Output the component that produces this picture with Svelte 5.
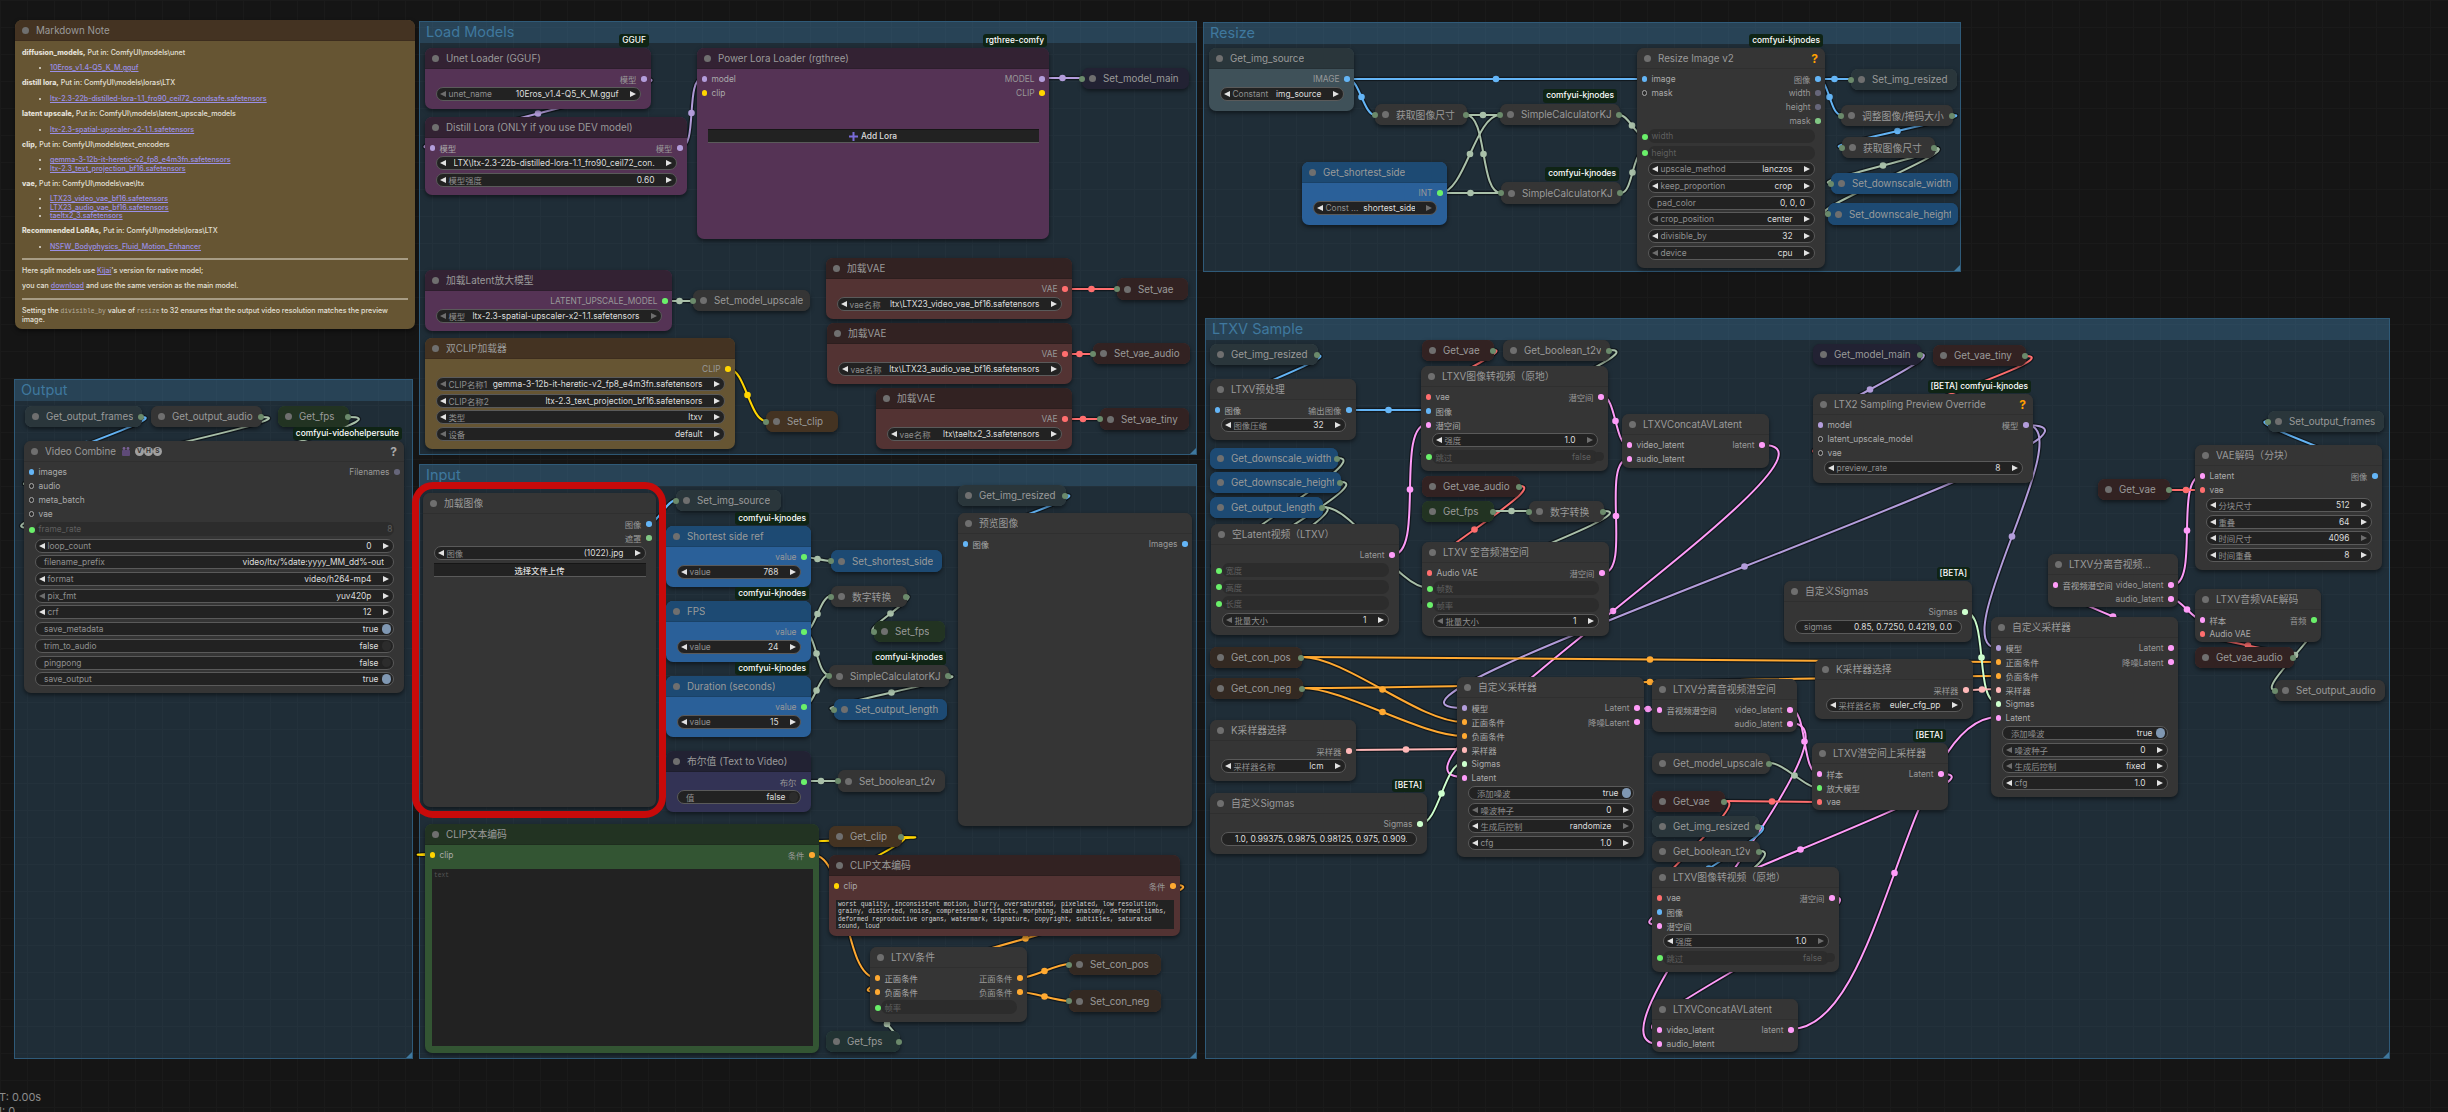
<script>
  const C = { M:'#b39ddb', Y:'#ffd500', V:'#ff6e6e', I:'#64b5f6', K:'#81c784', L:'#ff9cf9', O:'#ffa931', G:'#a9c0a9', S:'#cdffcd', A:'#ffb8b8', T:'#6af06a' };

  const groups = [
    { t:'Load Models', x:419, y:21, x2:1197, y2:455 },
    { t:'Resize', x:1203, y:22, x2:1961, y2:272 },
    { t:'Output', x:14, y:379, x2:413, y2:1059 },
    { t:'Input', x:419, y:464, x2:1197, y2:1059 },
    { t:'LTXV Sample', x:1205, y:318, x2:2390, y2:1059 }
  ].map(g => ({ ...g, w:g.x2-g.x, h:g.y2-g.y }));

  const L = (a,b,c,d,col,dot=true) => {
    const dist = Math.hypot(c-a,d-b), k = dist*0.25;
    return { d:`M${a} ${b}C${a+k} ${b} ${c-k} ${d} ${c} ${d}`, col:C[col], cx:(a+c)/2, cy:(b+d)/2, dot };
  };

  const links = [
    L(645,79,431,148,'M'), L(680,148,703,78,'M'), L(1043,78,1082,78,'M'),
    L(666,301,693,301,'G'), L(729,369,766,421,'Y'),
    L(1066,289,1117,289,'V'), L(1066,354,1093,354,'V'), L(1066,419,1100,419,'V'),
    L(1348,79,1644,79,'I'), L(1348,79,1375,115,'I'),
    L(1466,115,1500,115,'G'), L(1466,115,1501,193,'G'),
    L(1440,193,1500,115,'G'), L(1440,193,1501,193,'G'),
    L(1620,115,1644,136,'G'), L(1621,193,1644,152,'G'),
    L(1818,79,1851,79,'I'), L(1818,79,1841,115,'I'),
    L(1953,115,1842,147,'I'), L(1935,148,1831,183,'G'), L(1935,148,1828,214,'G'),
    L(142,417,31,471,'I'), L(262,417,31,485,'G'), L(349,417,31,528,'G'),
    L(649,523,676,500,'I'), L(804,557,831,561,'G'),
    L(804,632,831,596,'G'), L(804,632,829,675,'G'), L(804,706,829,675,'G'),
    L(907,596,874,631,'G'), L(949,676,834,709,'G'), L(804,781,838,781,'G'),
    L(1066,495,965,543,'I'),
    L(902,837,431,855,'Y'), L(902,837,835,885,'Y'),
    L(813,855,877,978,'O'), L(1174,885,877,992,'O'),
    L(1020,978,1069,964,'O'), L(1020,992,1069,1001,'O'), L(897,1041,877,1007,'G'),
    L(1317,355,1217,410,'I'), L(1349,410,1428,410,'I'),
    L(1338,458,1218,569,'G'), L(1341,482,1218,586,'G'), L(1323,507,1218,603,'G'), L(1323,507,1429,588,'G'),
    L(1494,350,1428,396,'V'), L(1610,350,1428,456,'G'),
    L(1392,555,1428,424,'L'), L(1602,396,1629,446,'L'), L(1603,573,1629,459,'L'),
    L(1763,445,1463,777,'L'), L(1520,486,1429,573,'V'),
    L(1494,511,1529,511,'G'), L(1604,511,1429,604,'G'),
    L(2026,425,1463,708,'M'), L(2026,425,1998,648,'M'), L(1920,354,1820,425,'M'),
    L(2025,356,1820,453,'V'),
    L(1302,657,1463,722,'O'), L(1302,657,1998,662,'O'),
    L(1302,688,1463,736,'O'), L(1302,688,1998,676,'O'),
    L(1349,750,1463,749,'A'), L(1420,824,1463,763,'S'),
    L(1637,708,1659,710,'L'), L(1790,709,1819,774,'L'), L(1790,723,1659,1044,'L'),
    L(1770,763,1819,788,'G'), L(1725,801,1819,802,'V'), L(1725,801,1659,897,'V'),
    L(1759,826,1659,911,'I'), L(1760,851,1659,957,'G'),
    L(1942,774,1659,925,'L'), L(1833,897,1659,1030,'L'), L(1791,1029,1998,717,'L'),
    L(1965,612,1998,703,'S'), L(1966,690,1998,689,'A'),
    L(2171,648,2055,585,'L'), L(2172,585,2202,476,'L'), L(2172,599,2202,620,'L'),
    L(2170,490,2202,490,'V'), L(2294,657,2202,634,'V'),
    L(2315,620,2275,690,'G'), L(2376,476,2268,421,'I')
  ];

  const KJ = 'comfyui-kjnodes';
  const N = (x,y,x2,y2,t,c,o={}) => {
    const s = v => { const [l,k] = v.split('|'); return { l, k:k.replace('!',''), ring:k.endsWith('!') }; };
    const i = (o.i||[]).map(s), out = (o.o||[]).map(s);
    const w = (o.w||[]).map(([l,v,k]) => ({
      l, v, k,
      arrows:k[0]==='c', ld:k==='cl'||k==='clr'||k==='dc', rd:k==='cr'||k==='clr'||k==='dc',
      linked:k[0]==='d', toggle:k==='on'||k==='off'||k==='ds', on:k==='on',
      dim:k==='d'||k==='dc'||k==='ds', plain:k==='t'||k==='on'||k==='off'
    }));
    const rows = Array.from({ length:Math.max(i.length,out.length) }, (_,r) => ({ a:i[r], b:out[r] }));
    return { x,y,w:x2-x,h:y2-y,t,c,rows,widgets:w,badge:o.badge,help:o.help,vhs:o.vhs,btn:o.btn,btnTop:o.btnTop,ta:o.ta,taDim:o.taDim,
      compact:!o.i&&!o.o&&!o.w&&!o.btn,
      cin:!t.startsWith('Get_'), cout:!t.startsWith('Set_') };
  };

  const decode = (x,y,x2,y2) => N(x,y,x2,y2,'LTXV图像转视频（原地）','def',{ i:['vae|V','图像|I','潜空间|L'], o:['潜空间|L'], w:[['强度','1.0','cr'],['跳过','false','ds']] });
  const sampler = (x,y,x2,y2,ctl,ck) => N(x,y,x2,y2,'自定义采样器','def',{ i:['模型|M','正面条件|O','负面条件|O','采样器|A','Sigmas|S','Latent|L'], o:['Latent|L','降噪Latent|L'], w:[['添加噪波','true','on'],['噪波种子','0','cl'],['生成后控制',ctl,ck],['cfg','1.0','c']] });
  const vae = (x,y,x2,y2,f) => N(x,y,x2,y2,'加载VAE','red',{ o:['VAE|V'], w:[['vae名称',f,'c']] });
  const concat = (x,y,x2,y2) => N(x,y,x2,y2,'LTXVConcatAVLatent','def',{ i:['video_latent|L','audio_latent|L'], o:['latent|L'] });
  const intNode = (y,t,v) => N(666,y,811,y+61,t,'blu',{ o:['value|T'], w:[['value',v,'c']], badge:KJ });

  const nodes = [
    N(425,48,651,109,'Unet Loader (GGUF)','pur',{ o:['模型|M'], w:[['unet_name','10Eros_v1.4-Q5_K_M.gguf','cl']], badge:'GGUF' }),
    N(425,117,687,195,'Distill Lora (ONLY if you use DEV model)','pur',{ i:['模型|M'], o:['模型|M'], w:[['','LTX\\ltx-2.3-22b-distilled-lora-1.1_fro90_ceil72_con...','c'],['模型强度','0.60','c']] }),
    N(697,48,1049,239,'Power Lora Loader (rgthree)','pur',{ i:['model|M','clip|Y'], o:['MODEL|M','CLIP|Y'], btn:'Add Lora', btnTop:29, badge:'rgthree-comfy' }),
    N(1082,68,1189,89,'Set_model_main','blk'),
    N(425,270,672,331,'加载Latent放大模型','pur',{ o:['LATENT_UPSCALE_MODEL|T'], w:[['模型','ltx-2.3-spatial-upscaler-x2-1.1.safetensors','clr']] }),
    N(693,290,810,311,'Set_model_upscale','def'),
    N(425,338,735,449,'双CLIP加载器','yel',{ o:['CLIP|Y'], w:[['CLIP名称1','gemma-3-12b-it-heretic-v2_fp8_e4m3fn.safetensors','cl'],['CLIP名称2','ltx-2.3_text_projection_bf16.safetensors','c'],['类型','ltxv','c'],['设备','default','cl']] }),
    N(766,411,838,432,'Set_clip','yelt'),
    vae(826,258,1072,319,'ltx\\LTX23_video_vae_bf16.safetensors'),
    vae(827,323,1072,384,'ltx\\LTX23_audio_vae_bf16.safetensors'),
    vae(876,388,1072,449,'ltx\\taeltx2_3.safetensors'),
    N(1117,278,1188,300,'Set_vae','red'),
    N(1093,343,1190,364,'Set_vae_audio','red'),
    N(1100,408,1189,430,'Set_vae_tiny','red'),

    N(1209,48,1354,111,'Get_img_source','pale',{ o:['IMAGE|I'], w:[['Constant','img_source','c']] }),
    N(1375,104,1467,125,'获取图像尺寸','def'),
    N(1500,104,1620,125,'SimpleCalculatorKJ','def',{ }),
    N(1302,162,1447,225,'Get_shortest_side','blu',{ o:['INT|T'], w:[['Const ...','shortest_side','cr']] }),
    N(1501,182,1621,204,'SimpleCalculatorKJ','def'),
    N(1637,48,1825,268,'Resize Image v2','def',{ i:['image|I','mask|K!'], o:['图像|I','width|X','height|X','mask|K'], w:[['width','','d'],['height','','d'],['upscale_method','lanczos','c'],['keep_proportion','crop','c'],['pad_color','0, 0, 0','t'],['crop_position','center','cl'],['divisible_by','32','c'],['device','cpu','cl']], badge:KJ, help:'#ffa000' }),
    N(1851,69,1957,90,'Set_img_resized','pale'),
    N(1841,105,1953,126,'调整图像/掩码大小','def'),
    N(1842,137,1935,158,'获取图像尺寸','def'),
    N(1831,173,1958,194,'Set_downscale_width','blut'),
    N(1828,203,1958,225,'Set_downscale_height','blut'),

    N(25,406,142,427,'Get_output_frames','pale'),
    N(151,406,262,427,'Get_output_audio','def'),
    N(278,406,349,427,'Get_fps','grn'),
    N(24,441,404,693,'Video Combine','def',{ vhs:true, help:'#a8a8a8', badge:'comfyui-videohelpersuite', i:['images|I','audio|T!','meta_batch|X!','vae|V!'], o:['Filenames|X'], w:[['frame_rate','8','dc'],['loop_count','0','c'],['filename_prefix','video/ltx/%date:yyyy_MM_dd%-out','t'],['format','video/h264-mp4','c'],['pix_fmt','yuv420p','cl'],['crf','12','c'],['save_metadata','true','on'],['trim_to_audio','false','off'],['pingpong','false','off'],['save_output','true','on']] }),

    N(423,493,656,807,'加载图像','def',{ o:['图像|I','遮罩|K'], w:[['图像','(1022).jpg','c']], btn:'选择文件上传', btnTop:3 }),
    N(676,490,781,511,'Set_img_source','pale'),
    intNode(526,'Shortest side ref','768'),
    intNode(601,'FPS','24'),
    intNode(676,'Duration (seconds)','15'),
    N(666,751,811,812,'布尔值 (Text to Video)','ind',{ o:['布尔|T'], w:[['值','false','off']] }),
    N(831,550,942,572,'Set_shortest_side','blut'),
    N(831,586,907,607,'数字转换','def'),
    N(874,621,945,642,'Set_fps','grn'),
    N(829,665,949,687,'SimpleCalculatorKJ','def'),
    N(834,699,947,720,'Set_output_length','blut'),
    N(838,770,945,792,'Set_boolean_t2v','def'),
    N(958,485,1066,506,'Get_img_resized','pale'),
    N(958,513,1192,826,'预览图像','def',{ i:['图像|I'], o:['Images|I'] }),
    N(425,824,819,1053,'CLIP文本编码','grn',{ i:['clip|Y'], o:['条件|O'], ta:'text', taDim:true }),
    N(829,826,902,847,'Get_clip','yelt'),
    N(829,855,1180,936,'CLIP文本编码','red',{ i:['clip|Y'], o:['条件|O'], ta:'worst quality, inconsistent motion, blurry, oversaturated, pixelated, low resolution, grainy, distorted, noise, compression artifacts, morphing, bad anatomy, deformed limbs, deformed reproductive organs, watermark, signature, copyright, subtitles, saturated sound, loud' }),
    N(870,947,1027,1022,'LTXV条件','def',{ i:['正面条件|O','负面条件|O'], o:['正面条件|O','负面条件|O'], w:[['帧率','','d']] }),
    N(1069,954,1161,975,'Set_con_pos','brn'),
    N(1069,990,1161,1012,'Set_con_neg','brn'),
    N(826,1031,900,1052,'Get_fps','cyn'),

    N(1210,344,1318,365,'Get_img_resized','pale'),
    N(1210,379,1356,440,'LTXV预处理','def',{ i:['图像|I'], o:['输出图像|I'], w:[['图像压缩','32','c']] }),
    N(1210,448,1338,469,'Get_downscale_width','blut'),
    N(1210,472,1341,493,'Get_downscale_height','blut'),
    N(1210,497,1323,518,'Get_output_length','blut'),
    N(1211,524,1399,635,'空Latent视频（LTXV）','def',{ o:['Latent|L'], w:[['宽度','','d'],['高度','','d'],['长度','','d'],['批量大小','1','cl']] }),
    N(1422,340,1494,361,'Get_vae','red'),
    N(1503,340,1610,361,'Get_boolean_t2v','def'),
    decode(1421,366,1608,471),
    concat(1622,414,1769,468),
    N(1422,476,1520,497,'Get_vae_audio','red'),
    N(1422,501,1494,522,'Get_fps','grn'),
    N(1529,501,1604,522,'数字转换','def'),
    N(1422,542,1609,636,'LTXV 空音频潜空间','def',{ i:['Audio VAE|V'], o:['潜空间|L'], w:[['帧数','','d'],['帧率','','d'],['批量大小','1','cl']] }),
    N(1210,647,1302,668,'Get_con_pos','brn'),
    N(1210,678,1303,699,'Get_con_neg','brn'),
    N(1210,720,1356,781,'K采样器选择','def',{ o:['采样器|A'], w:[['采样器名称','lcm','c']] }),
    N(1210,793,1427,854,'自定义Sigmas','def',{ o:['Sigmas|S'], w:[['','1.0, 0.99375, 0.9875, 0.98125, 0.975, 0.909...','t']], badge:'[BETA]' }),
    sampler(1457,677,1644,857,'randomize','cr'),
    N(1652,679,1797,732,'LTXV分离音视频潜空间','def',{ i:['音视频潜空间|L'], o:['video_latent|L','audio_latent|L'] }),
    N(1652,753,1770,774,'Get_model_upscale','def'),
    N(1652,791,1725,812,'Get_vae','red'),
    N(1652,816,1759,837,'Get_img_resized','pale'),
    N(1652,841,1760,862,'Get_boolean_t2v','def'),
    decode(1652,867,1839,972),
    concat(1652,999,1798,1052),

    N(1813,344,1921,365,'Get_model_main','blk'),
    N(1933,345,2026,366,'Get_vae_tiny','red'),
    N(1813,394,2033,483,'LTX2 Sampling Preview Override','def',{ i:['model|M','latent_upscale_model|X!','vae|V!'], o:['模型|M'], w:[['preview_rate','8','c']], badge:'[BETA] comfyui-kjnodes', help:'#ffa000' }),
    N(2268,411,2384,432,'Set_output_frames','pale'),
    N(2195,445,2382,570,'VAE解码（分块）','def',{ i:['Latent|L','vae|V'], o:['图像|I'], w:[['分块尺寸','512','c'],['重叠','64','c'],['时间尺寸','4096','cr'],['时间重叠','8','c']] }),
    N(2098,479,2170,500,'Get_vae','red'),
    N(2048,554,2178,607,'LTXV分离音视频...','def',{ i:['音视频潜空间|L'], o:['video_latent|L','audio_latent|L'] }),
    N(2195,589,2321,642,'LTXV音频VAE解码','def',{ i:['样本|L','Audio VAE|V'], o:['音频|T'] }),
    N(2195,647,2294,668,'Get_vae_audio','red'),
    N(2275,680,2385,701,'Set_output_audio','def'),
    N(1784,581,1972,642,'自定义Sigmas','def',{ o:['Sigmas|S'], w:[['sigmas','0.85, 0.7250, 0.4219, 0.0','t']], badge:'[BETA]' }),
    N(1815,659,1973,719,'K采样器选择','def',{ o:['采样器|A'], w:[['采样器名称','euler_cfg_pp','c']] }),
    sampler(1991,617,2178,797,'fixed','cl'),
    N(1812,743,1948,810,'LTXV潜空间上采样器','def',{ i:['样本|L','放大模型|T','vae|V'], o:['Latent|L'], badge:'[BETA]' })
  ];

  const floatingBadges = [
    { t:KJ, r:1617, y:89 },
    { t:KJ, r:1619, y:167 },
    { t:KJ, r:946, y:651 }
  ];
</script>

<div class="canvas">
  {#each groups as g}
    <section class="group" style="left:{g.x}px;top:{g.y}px;width:{g.w}px;height:{g.h}px">
      <h2>{g.t}</h2>
      <i class="grip"></i>
    </section>
  {/each}

  <svg class="links" width="2448" height="1112" viewBox="0 0 2448 1112" fill="none">
    {#each links as k}
      <path d={k.d} stroke="#000" stroke-opacity=".45" stroke-width="4.5" />
    {/each}
    {#each links as k}
      <path d={k.d} stroke={k.col} stroke-width="2" />
      {#if k.dot}<circle cx={k.cx} cy={k.cy} r="3.3" fill={k.col} />{/if}
    {/each}
  </svg>

  <article class="node c-yel" style="left:15px;top:20px;width:400px;height:309px">
    <header><b class="td"></b><span>Markdown Note</span></header>
    <div class="note">
      <p><strong>diffusion_models,</strong> Put in: ComfyUI\models\unet</p>
      <ul><li><a href="#a">10Eros_v1.4-Q5_K_M.gguf</a></li></ul>
      <p><strong>distill lora,</strong> Put in: ComfyUI\models\loras\LTX</p>
      <ul><li><a href="#a">ltx-2.3-22b-distilled-lora-1.1_fro90_ceil72_condsafe.safetensors</a></li></ul>
      <p><strong>latent upscale,</strong> Put in: ComfyUI\models\latent_upscale_models</p>
      <ul><li><a href="#a">ltx-2.3-spatial-upscaler-x2-1.1.safetensors</a></li></ul>
      <p><strong>clip,</strong> Put in: ComfyUI\models\text_encoders</p>
      <ul><li><a href="#a">gemma-3-12b-it-heretic-v2_fp8_e4m3fn.safetensors</a></li><li><a href="#a">ltx-2.3_text_projection_bf16.safetensors</a></li></ul>
      <p><strong>vae,</strong> Put in: ComfyUI\models\vae\ltx</p>
      <ul><li><a href="#a">LTX23_video_vae_bf16.safetensors</a></li><li><a href="#a">LTX23_audio_vae_bf16.safetensors</a></li><li><a href="#a">taeltx2_3.safetensors</a></li></ul>
      <p><strong>Recommended LoRAs,</strong> Put in: ComfyUI\models\loras\LTX</p>
      <ul><li><a href="#a">NSFW_Bodyphysics_Fluid_Motion_Enhancer</a></li></ul>
      <hr />
      <p>Here split models use <a href="#a">Kijai</a>'s version for native model;</p>
      <p>you can <a href="#a">download</a> and use the same version as the main model.</p>
      <hr />
      <p>Setting the <code>divisible_by</code> value of <code>resize</code> to 32 ensures that the output video resolution matches the preview image.</p>
    </div>
  </article>

  {#each nodes as n}
    <article class="node c-{n.c}" class:compact={n.compact} style="left:{n.x}px;top:{n.y}px;width:{n.w}px;height:{n.h}px">
      {#if n.badge}<em class="badge">{n.badge}</em>{/if}
      <header>
        <b class="td"></b><span class="tt">{n.t}</span>
        {#if n.vhs}
          <svg class="film" width="10" height="9" viewBox="0 0 10 9"><rect x="1" y="3" width="8" height="6" rx="1" fill="#5e4a78"/><circle cx="3" cy="1.5" r="1.4" fill="#7a6196"/><circle cx="7" cy="1.5" r="1.4" fill="#7a6196"/></svg>
          <span class="vhs">V</span><span class="vhs">H</span><span class="vhs">S</span>
        {/if}
        {#if n.help}<u class="help" style="color:{n.help}">?</u>{/if}
      </header>
      {#if n.compact}
        {#if n.cin}<i class="cd cl"></i>{/if}
        {#if n.cout}<i class="cd cr"></i>{/if}
      {:else}
        {#if n.rows.length}
          <div class="slots">
            {#each n.rows as r}
              <div class="row">
                <span class="in">{#if r.a}<i class="dot k-{r.a.k}" class:ring={r.a.ring}></i>{r.a.l}{/if}</span>
                <span class="out">{#if r.b}{r.b.l}<i class="dot k-{r.b.k}" class:ring={r.b.ring}></i>{/if}</span>
              </div>
            {/each}
          </div>
        {/if}
        {#if n.widgets.length}
          <div class="widgets">
            {#each n.widgets as w}
              <div class="w" class:dim={w.dim} class:plain={w.plain}>
                {#if w.linked}<i class="wd"></i>{/if}
                {#if w.arrows}<i class="ar l" class:ad={w.ld}></i>{/if}
                <span class="wl">{w.l}</span><span class="wv">{w.v}</span>
                {#if w.arrows}<i class="ar r" class:ad={w.rd}></i>{/if}
                {#if w.toggle}<i class="tg" class:on={w.on}></i>{/if}
              </div>
            {/each}
          </div>
        {/if}
        {#if n.btn}
          <button class="btn" style="margin-top:{n.btnTop}px">
            {#if n.btn === 'Add Lora'}<svg width="9" height="9" viewBox="0 0 9 9"><path d="M4.5 0v9M0 4.5h9" stroke="#7a6cd8" stroke-width="2"/></svg>{/if}
            {n.btn}
          </button>
        {/if}
        {#if n.ta}<div class="ta" class:dimta={n.taDim}>{n.ta}</div>{/if}
      {/if}
    </article>
  {/each}

  {#each floatingBadges as b}
    <em class="badge free" style="right:{2448-b.r}px;top:{b.y}px">{b.t}</em>
  {/each}

  <div class="mark"></div>
  <div class="stats">T: 0.00s<br />I: 0</div>
</div>

<style>
  :global(body) { margin:0; background:#151515; }
  .canvas {
    position:relative; width:2448px; height:1112px; overflow:hidden;
    font-family:Inter,"Noto Sans CJK SC",sans-serif; color:#999;
    background-color:#151515;
    background-image:linear-gradient(#1a1a1a 1px,transparent 1px),linear-gradient(90deg,#1a1a1a 1px,transparent 1px);
    background-size:27px 27px;
  }
  .group { position:absolute; box-sizing:border-box; background:rgba(63,120,158,.25); border:1.5px solid #2f5a78; }
  .group h2 { margin:0; height:21px; padding-left:6px; background:rgba(63,120,158,.3); font-size:14.5px; line-height:20px; font-weight:400; color:#3f789e; }
  .grip { position:absolute; right:0; bottom:0; border-style:solid; border-width:0 0 6px 6px; border-color:transparent transparent #3f789e transparent; }
  .links { position:absolute; left:0; top:0; }

  .node { position:absolute; box-sizing:border-box; display:flex; flex-direction:column; border-radius:7px; background:var(--b); box-shadow:0 2px 4px rgba(0,0,0,.5); }
  .node header { flex:none; height:21px; box-sizing:border-box; padding:0 7px; display:flex; align-items:center; gap:7px; background:var(--t); border-radius:7px 7px 0 0; border-bottom:1px solid rgba(0,0,0,.1); font-size:9.8px; white-space:nowrap; color:#9a9a9a; }
  .node.compact { justify-content:center; }
  .node.compact header { height:100%; border:0; border-radius:7px; }
  .tt { overflow:hidden; }
  .td { flex:none; width:7px; height:7px; border-radius:50%; background:#6f6f6f; }
  .help { margin-left:auto; text-decoration:none; font-size:12px; font-weight:700; }
  .film { margin:0 -3px 0 -2px; }
  .vhs { flex:none; width:9px; height:9px; margin-right:-7px; border-radius:50%; background:#a0a0a0; color:#333; font-size:6.5px; font-weight:700; line-height:9px; text-align:center; }

  .c-def { --t:#353535; --b:#353535; }
  .c-red { --t:#322222; --b:#533333; }
  .c-pur { --t:#332233; --b:#553355; }
  .c-yel { --t:#443322; --b:#665533; }
  .c-yelt { --t:#443322; --b:#443322; }
  .c-grn { --t:#223322; --b:#335533; }
  .c-cyn { --t:#223333; --b:#335555; }
  .c-brn { --t:#332922; --b:#593930; }
  .c-blk { --t:#222233; --b:#222233; }
  .c-ind { --t:#222233; --b:#333355; }
  .c-pale { --t:#2a363b; --b:#3f5159; }
  .c-blu { --t:#1d4a73; --b:#2a6099; }
  .c-blut { --t:#1d4a73; --b:#1d4a73; }

  .compact.c-red header { background:#322222; }
  .cd { position:absolute; top:7.5px; width:6px; height:6px; border-radius:50%; background:#6b8a6b; }
  .cl { left:-3px; }
  .cr { right:-2px; }

  .badge { position:absolute; right:2px; bottom:100%; margin-bottom:1px; height:13.5px; padding:0 3px; border-radius:3px; background:#0f2415; color:#fff; font-style:normal; font-size:8.4px; font-weight:500; line-height:13.5px; white-space:nowrap; z-index:2; }
  .badge.free { bottom:auto; margin:0; }

  .slots { padding-top:3px; }
  .row { height:14px; padding:0 4.5px; display:flex; justify-content:space-between; align-items:center; font-size:8.4px; white-space:nowrap; }
  .row span { display:flex; align-items:center; gap:4.5px; }
  .row .in { color:#aaa; }
  .dot { flex:none; width:5.5px; height:5.5px; border-radius:50%; box-sizing:border-box; }
  .dot.ring { background:#2b2b2b; border:1.4px solid; }
  .k-M { background:#b39ddb; border-color:#b39ddb; }
  .k-Y { background:#ffd500; border-color:#ffd500; }
  .k-V { background:#ff6e6e; border-color:#ff6e6e; }
  .k-I { background:#64b5f6; border-color:#64b5f6; }
  .k-K { background:#81c784; border-color:#81c784; }
  .k-L { background:#ff9cf9; border-color:#ff9cf9; }
  .k-O { background:#ffa931; border-color:#ffa931; }
  .k-S { background:#cdffcd; border-color:#cdffcd; }
  .k-A { background:#ffb8b8; border-color:#ffb8b8; }
  .k-T { background:#6af06a; border-color:#6af06a; }
  .k-X { background:#66667a; border-color:#66667a; }

  .widgets { flex:none; margin-top:1px; padding:0 10.5px; display:flex; flex-direction:column; gap:2.7px; }
  .w { position:relative; height:14px; box-sizing:border-box; display:flex; align-items:center; border:1px solid #5a5a5a; border-radius:7px; background:#222; font-size:8.4px; white-space:nowrap; }
  .w.plain { padding:0 8.5px; }
  .wl { flex:none; color:#8f8f8f; }
  .wv { flex:1; min-width:0; margin-left:5px; overflow:hidden; text-align:right; color:#ddd; }
  .w.dim { border-color:transparent; background:#2c2c2c; padding:0 8.5px; }
  .w.dim .wl, .w.dim .wv { color:#5f5f5f; }
  .wd { position:absolute; left:-6.5px; top:3.5px; width:6px; height:6px; border-radius:50%; background:#6af06a; }
  .ar { flex:none; width:0; height:0; border-style:solid; border-color:transparent; }
  .ar.l { margin:0 3px 0 3px; border-width:3.5px 6px 3.5px 0; border-right-color:#e2e2e2; }
  .ar.r { margin:0 4px 0 11px; border-width:3.5px 0 3.5px 6px; border-left-color:#e2e2e2; }
  .ar.l.ad { border-right-color:#6e6e6e; }
  .ar.r.ad { border-left-color:#6e6e6e; }
  .w.dim .ar { margin-left:0; }
  .w.dim { padding:0 0 0 3px; }
  .tg { flex:none; width:9.5px; height:9.5px; margin:0 -7px 0 3px; border-radius:50%; background:#2c2c2c; }
  .tg.on { background:#7f97b2; }

  .btn { flex:none; height:14px; margin:0 10.5px; padding:0; display:flex; align-items:center; justify-content:center; gap:3px; box-sizing:border-box; border:0; border-top:1px solid #161616; border-bottom:1px solid #5a5a5a; background:#222; color:#ddd; font:500 8.4px Inter,"Noto Sans CJK SC",sans-serif; }
  .ta { flex:1; min-height:0; margin:7px 6px 7px 7px; padding:1px 2px; overflow:hidden; background:#222; color:#d4d4d4; font:6.3px/7.4px "Liberation Mono","Noto Sans CJK SC",monospace; }
  .ta.dimta { color:#555; padding-top:3px; }

  .note { flex:1; padding:7.6px 7px 0; font-size:7.1px; line-height:8.2px; color:#e4e0d8; font-weight:500; }
  .note strong { font-weight:800; }
  .note p { margin:7.2px 0; }
  .note p:first-child { margin-top:0; }
  .note ul { margin:7.2px 0; padding-left:28px; }
  .note a { color:#9a8fe6; text-decoration:underline; }
  .note hr { margin:6.4px 0; height:2px; border:0; background:#a79c85; }
  .note code { font-family:"Liberation Mono",monospace; font-size:6.3px; color:#b9b2a0; }

  .mark { position:absolute; left:412px; top:482px; width:254px; height:336px; box-sizing:border-box; border:7.5px solid #c80a0a; border-radius:21px; pointer-events:none; }
  .stats { position:absolute; left:-1px; top:1090px; color:#8c8c8c; font-size:11px; line-height:14px; }
</style>
